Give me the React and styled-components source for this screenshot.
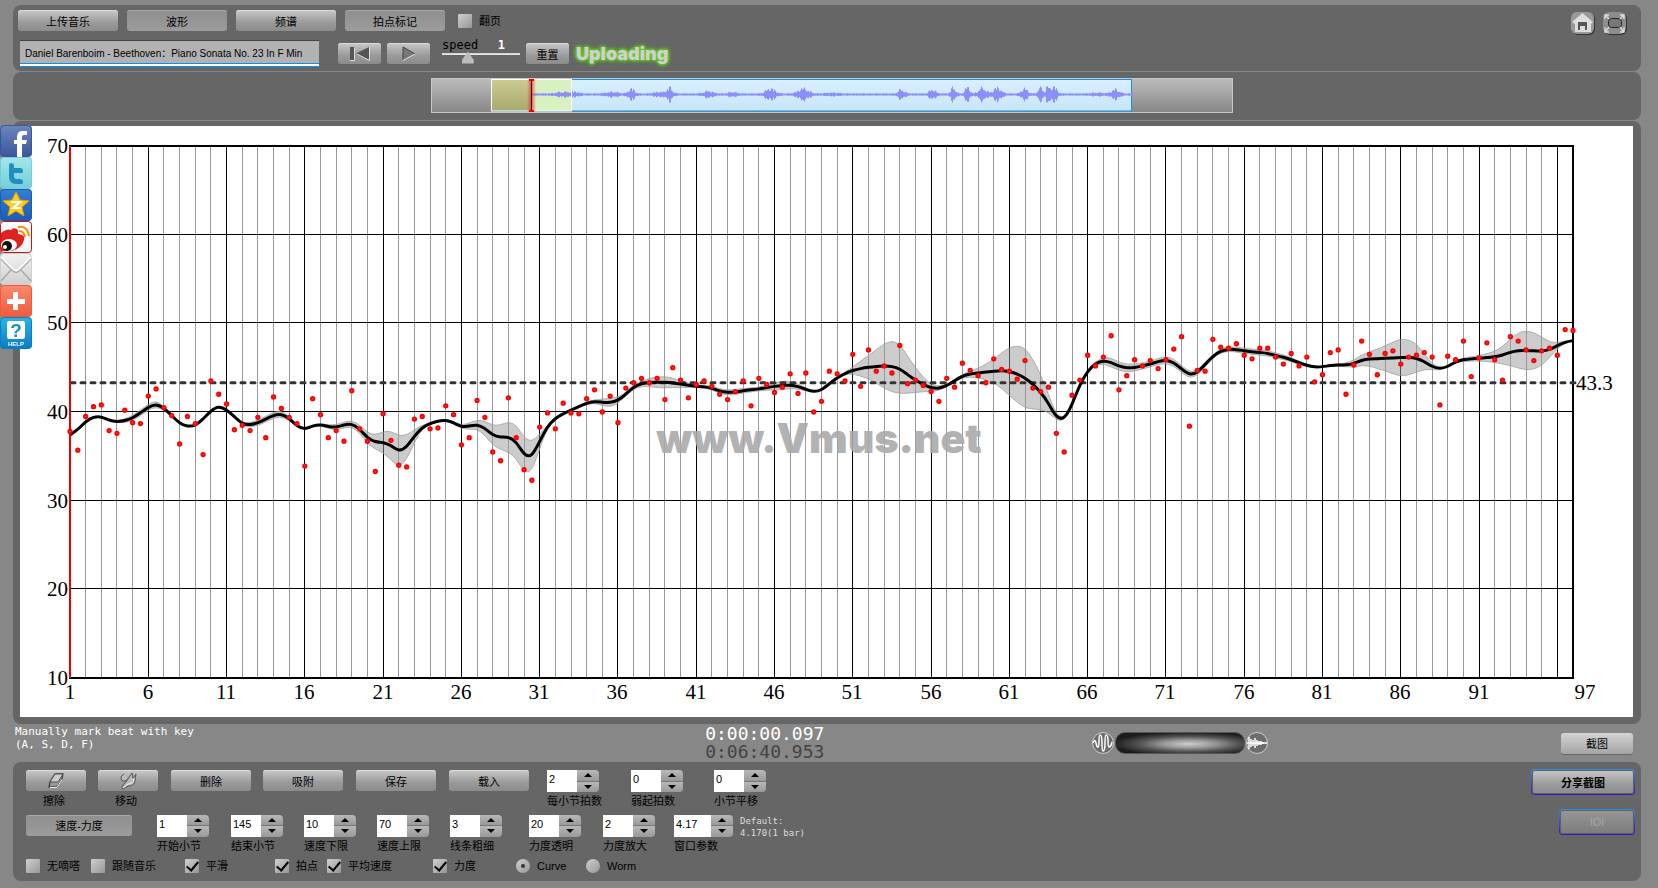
import React, { useState } from 'react';
import styled, { createGlobalStyle, css } from 'styled-components';

const sans = '"Liberation Sans", "Noto Sans CJK SC", sans-serif';
const mono = '"DejaVu Sans Mono", monospace';

const GlobalStyle = createGlobalStyle`
    * {
        box-sizing: border-box;
    }

    body {
        margin: 0;
        background: #878787;
        font-family: ${sans};
        font-size: 11px;
        color: #000;
    }

    button, input {
        font-family: inherit;
        font-size: inherit;
        color: inherit;
        margin: 0;
    }
`;

const Page = styled.div`
    display: flex;
    flex-direction: column;
    gap: 1px;
    min-width: 1100px;
    padding: 5px 17px 7px 13px;
`;

const Panel = styled.section`
    background: #666;
    border-radius: 8px;
`;

const Toolbar = styled(Panel)`
    display: flex;
    justify-content: space-between;
    height: 66px;
    padding: 5px 13px 4px 5px;
`;

const ToolRows = styled.div`
    display: flex;
    flex-direction: column;
    gap: 9px;
`;

const ToolRow = styled.div`
    display: flex;
    align-items: center;
    gap: ${props => props.$gap || 0}px;
`;

const Button = styled.button`
    display: flex;
    align-items: center;
    justify-content: center;
    flex: none;
    width: ${props => props.$w || 80}px;
    height: 21px;
    padding: 0;
    border: 0;
    border-radius: 3px;
    background: linear-gradient(#c8c8c8, #9a9a9a 60%, #8c8c8c);
    box-shadow: inset 0 1px 0 #dcdcdc;
    cursor: pointer;

    ${props => props.$pressed && css`
        background: linear-gradient(#8e8e8e, #9c9c9c);
        box-shadow: inset 0 1px 0 #a8a8a8;
    `}

    ${props => props.$light && css`
        background: linear-gradient(#d4d4d4, #a4a4a4);
        box-shadow: 0 1px 0 #666;
    `}
`;

const Frame = styled.div`
    padding: 1px;
    border-radius: 4px;
    background: linear-gradient(#2b8ef0, #3a12c6);

    & > button {
        height: 24px;
        border-radius: 3px;
        box-shadow: inset 0 0 0 1px #606060;
        font-weight: bold;
    }

    & > button:disabled {
        background: linear-gradient(#979797, #7c7c7c);
        color: #a4a4a4;
        font-weight: normal;
    }
`;

const Check = styled.input`
    appearance: none;
    display: grid;
    place-items: center;
    width: 14px;
    height: 14px;
    flex: none;
    border-radius: ${props => (props.type === 'radio' ? '50%' : '1px')};
    background: linear-gradient(135deg, #cfcfcf, #979797);

    &[type='checkbox']:checked::after {
        content: '';
        width: 5px;
        height: 10px;
        margin-bottom: 3px;
        border: solid #000;
        border-width: 0 2px 2px 0;
        transform: rotate(40deg);
    }

    &[type='radio']:checked::after {
        content: '';
        width: 4px;
        height: 4px;
        border-radius: 50%;
        background: #333;
    }
`;

const CheckLabel = styled.label`
    display: flex;
    align-items: center;
    gap: 7px;
    height: 14px;
    width: ${props => (props.$w ? props.$w + 'px' : 'auto')};
    padding-left: ${props => props.$indent || 0}px;
    line-height: 14px;
    white-space: nowrap;
`;

const SongTitle = styled.input`
    width: 299px;
    height: 27px;
    margin: 0 19px 0 2px;
    padding: 0 5px 3px;
    border: 0;
    border-top: 1px solid #444;
    border-bottom: 1px solid #0a90f0;
    background: linear-gradient(#b2b2b2 22px, #0a90f0 22px, #0a90f0 23px, #fff 23px);
    font-size: 10px;
`;

const Speed = styled.div`
    width: 78px;
    height: 27px;
    margin: 0 6px 0 12px;
    font: 12px/11px ${mono};

    & > div {
        display: flex;
        justify-content: space-between;
        padding-right: 15px;
    }

    & output {
        color: #fff;
        font-weight: bold;
    }

    & input {
        appearance: none;
        display: block;
        width: 100%;
        height: 13px;
        background: linear-gradient(#0000 2px, #ccc 2px, #eee 4px, #0000 4px);
    }

    & input::-webkit-slider-thumb {
        appearance: none;
        width: 12px;
        height: 12px;
        background: #bbb;
        clip-path: polygon(50% 0, 100% 70%, 100% 100%, 0 100%, 0 70%);
    }
`;

const Uploading = styled.div`
    margin-left: 7px;
    font: 900 18px/21px Inter, ${sans};
    color: #d0d0d0;
    text-shadow: 0 0 3px #6c2, 0 0 3px #6c2, 0 0 4px #6c2, 0 0 5px #6c2;
`;

const Corner = styled.div`
    display: flex;
    gap: 6px;
    padding-top: 1px;
`;

const CornerButton = styled.button`
    width: 26px;
    height: 25px;
    padding: 0;
    border: 0;
    background: none;

    & svg {
        display: block;
    }
`;

const Overview = styled(Panel)`
    display: flex;
    justify-content: center;
    height: 48px;
    padding: 6px 0 0 9px;
`;

const Track = styled.div`
    width: 802px;
    height: 35px;
    border: 1px solid #c8c8c8;
    background: linear-gradient(#bbb, #888);

    & svg {
        display: block;
    }
`;

const ChartPanel = styled(Panel)`
    padding: 5px 8px 7px 7px;

    & svg {
        display: block;
        width: 100%;
        height: auto;
        background: #fff;
    }
`;

const Share = styled.nav`
    position: fixed;
    left: 0;
    top: 125px;
    display: flex;
    flex-direction: column;

    & a, & svg {
        display: block;
        width: 32px;
        height: 32px;
    }
`;

const Status = styled.div`
    display: grid;
    grid-template-columns: 691fr 386fr 543fr;
    height: 36px;
    padding: 0 8px 0 2px;
`;

const Hint = styled.p`
    margin: 0;
    font: 11px/13px ${mono};
    color: #fff;
`;

const Clock = styled.div`
    font: 18px/18px ${mono};
    color: #fff;

    & div + div {
        color: #444;
    }
`;

const StatusRight = styled.div`
    display: flex;
    align-items: center;
    justify-content: space-between;
`;

const Volume = styled.div`
    display: flex;
    align-items: center;

    & input {
        appearance: none;
        width: 130px;
        height: 22px;
        border-radius: 10px;
        background: radial-gradient(ellipse at 57% 55%, #ccc, #999 25%, #555 48%, #1c1c1c 75%);
        border: 1px solid #555;
    }

    & input::-webkit-slider-thumb {
        appearance: none;
        width: 1px;
    }
`;

const Controls = styled(Panel)`
    display: flex;
    justify-content: space-between;
    height: 119px;
    padding: 7px 6px 8px 13px;
`;

const ControlRows = styled.div`
    display: flex;
    flex-direction: column;
    padding-top: 1px;
`;

const ControlRow = styled.div`
    display: flex;
    height: 45px;
`;

const Tool = styled.div`
    width: ${props => props.$slot}px;
`;

const Caption = styled.label`
    display: block;
    padding-top: 2px;
    line-height: 14px;
    white-space: nowrap;
`;

const ToolCaption = styled(Caption)`
    width: 56px;
    padding-top: 3px;
    text-align: center;
`;

const FieldBox = styled.div`
    width: ${props => props.$slot}px;
`;

const Spinner = styled.div`
    display: flex;
    height: 22px;

    & input {
        width: ${props => props.$w}px;
        height: 22px;
        padding: 0 2px 4px;
        border: 0;
        background: #fff;
    }
`;

const Steps = styled.div`
    display: flex;
    flex-direction: column;
    gap: 1px;
    width: 22px;
    border-radius: 0 4px 4px 0;
    overflow: hidden;
    background: #777;
`;

const Step = styled.button`
    flex: 1;
    display: grid;
    place-items: center;
    padding: 0;
    border: 0;
    background: linear-gradient(#b8b8b8, #999);

    &::after {
        content: '';
        border: 4px solid transparent;
        border-top-width: ${props => (props.$up ? 0 : 4)}px;
        border-bottom-width: ${props => (props.$up ? 4 : 0)}px;
        border-${props => (props.$up ? 'bottom' : 'top')}-color: #000;
    }
`;

const Default = styled.p`
    margin: 0;
    font: 9px/12px ${mono};
    color: #ddd;
`;

const Actions = styled.div`
    display: flex;
    flex-direction: column;
    align-items: flex-end;
    gap: 14px;
`;

// tempo of every half bar, in beats per minute
const beats = [
    37.8, 35.7, 39.5, 40.6, 40.8, 37.9, 37.6, 40.2, 38.8, 38.7, 41.8, 42.6, 40.5, 39.6, 36.4, 39.5,
    38.7, 35.2, 43.5, 42.0, 40.9, 38.0, 38.5, 37.9, 39.4, 37.1, 41.7, 40.4, 39.4, 38.7, 33.9, 41.5,
    39.7, 37.1, 37.9, 36.7, 42.4, 38.1, 36.7, 33.3, 39.8, 36.8, 34.0, 33.8, 39.2, 39.5, 38.1, 38.2,
    40.7, 39.7, 36.3, 37.1, 41.3, 39.4, 35.5, 34.5, 41.6, 37.1, 33.5, 32.3, 38.3, 39.9, 38.1, 41.0,
    39.9, 39.8, 41.5, 42.5, 40.0, 41.8, 38.8, 42.7, 43.3, 43.8, 43.3, 43.8, 41.4, 45.0, 43.6, 41.6,
    43.1, 43.5, 42.9, 42.0, 41.4, 42.3, 43.5, 40.7, 43.8, 43.1, 42.2, 42.8, 44.3, 42.1, 44.4, 40.0,
    41.2, 44.6, 44.3, 43.5, 46.5, 42.9, 47.0, 44.6, 45.2, 44.4, 47.5, 43.2, 43.6, 43.0, 42.3, 41.2,
    43.8, 42.8, 45.5, 44.7, 44.1, 43.3, 46.0, 44.8, 44.6, 43.7, 45.8, 42.7, 42.3, 42.8, 37.6, 35.5,
    41.9, 43.6, 46.4, 45.2, 46.2, 48.6, 42.5, 44.1, 45.9, 45.2, 45.8, 44.9, 45.9, 47.1, 48.5, 38.4,
    44.7, 44.6, 48.2, 47.3, 47.2, 47.7, 46.4, 46.0, 47.2, 47.2, 46.2, 45.4, 46.6, 45.2, 46.2, 43.4,
    44.2, 46.7, 47.0, 42.0, 45.3, 48.0, 46.5, 44.2, 46.6, 46.9, 45.4, 46.2, 46.4, 46.7, 46.2, 40.8,
    46.3, 45.9, 48.0, 44.0, 46.1, 47.8, 45.9, 43.6, 48.5, 48.0, 47.0, 45.8, 46.9, 47.2, 46.4, 49.3,
    49.2
];

const smooth = [
    37.4, 38.0, 38.95, 39.45, 39.5, 39.05, 38.9, 39.0, 39.3, 39.9, 40.55, 40.95, 40.45, 39.6, 38.7, 38.35,
    38.45, 39.2, 40.15, 40.7, 40.25, 39.5, 38.6, 38.55, 38.75, 39.2, 39.65, 39.8, 39.3, 38.4, 38.0, 38.45,
    38.6, 38.35, 38.25, 38.55, 38.7, 38.1, 37.05, 36.6, 36.6, 36.25, 35.5, 36.0, 37.3, 38.3, 38.7, 39.0,
    39.1, 38.8, 38.3, 38.4, 38.6, 38.2, 37.35, 37.15, 37.2, 36.7, 35.1, 34.9, 36.7, 38.4, 39.3, 39.8,
    40.2, 40.6, 41.0, 41.2, 41.1, 41.05, 41.3, 42.0, 42.85, 43.2, 43.35, 43.35, 43.35, 43.3, 43.15, 43.0,
    42.9, 42.85, 42.7, 42.35, 42.2, 42.25, 42.4, 42.5, 42.6, 42.75, 42.9, 43.0, 43.05, 42.9, 42.55, 42.25,
    42.45, 43.2, 43.85, 44.35, 44.7, 44.9, 45.05, 45.15, 45.2, 45.15, 44.9, 44.2, 43.6, 43.1, 42.7, 42.65,
    42.95, 43.55, 44.05, 44.3, 44.4, 44.5, 44.6, 44.7, 44.55, 44.3, 43.85, 43.15, 42.25, 41.0, 39.35, 39.1,
    40.8, 43.1, 44.65, 45.5, 45.8, 45.6, 45.15, 44.95, 45.0, 45.2, 45.4, 45.7, 45.9, 45.6, 44.85, 44.15,
    44.4, 45.35, 46.3, 46.9, 47.1, 47.05, 46.9, 46.8, 46.7, 46.65, 46.35, 46.2, 45.9, 45.55, 45.25, 45.05,
    45.1, 45.25, 45.3, 45.3, 45.45, 45.85, 46.0, 46.0, 46.05, 46.1, 46.15, 46.15, 46.1, 45.7, 45.1, 44.85,
    45.1, 45.7, 45.9, 46.0, 46.05, 46.15, 46.2, 46.4, 46.75, 46.95, 46.95, 46.9, 46.85, 47.0, 47.5, 47.9,
    48.05
];

// half height of the loudness band: [beat, bpm]
const loudness = [
    [0, 0], [4, 0], [6, 0.1], [8, 0.3], [11, 0.35], [13, 0.1], [15, 0], [20, 0], [22, 0.2], [24, 0.3],
    [27, 0.35], [29, 0.1], [31, 0], [34, 0.3], [36, 0.35], [38, 0.6], [39, 0.8], [40, 1.2], [41, 1.6],
    [42, 1.8], [43, 1.4], [44, 0.7], [45, 0.2], [47, 0], [50, 0.2], [52, 0.5], [53, 0.8], [54, 1.1],
    [55, 1.4], [56, 1.7], [57, 1.9], [58, 1.95], [59, 1.7], [60, 0.8], [61, 0.15], [63, 0], [67, 0.2],
    [69, 0.5], [71, 0.2], [73, 0.3], [75, 0.6], [76, 0.65], [78, 0.4], [80, 0.1], [84, 0.3], [88, 0.2],
    [91, 0.5], [93, 0.3], [95, 0], [99, 0.1], [100, 0.4], [102, 1.3], [103, 1.9], [104, 2.5], [105, 2.9],
    [106, 2.8], [107, 2.1], [108, 1.4], [109, 0.8], [110, 0.4], [112, 0.1], [114, 0.2], [116, 0.5],
    [118, 1.3], [119, 2], [120, 2.7], [121, 3.2], [122, 3.4], [123, 2.8], [124, 2], [125, 1], [126, 0.3],
    [128, 0], [131, 0.2], [133, 0.5], [136, 0.4], [138, 0.3], [140, 0.4], [142, 0.4], [144, 0.3],
    [146, 0.2], [150, 0.3], [154, 0.3], [157, 0.2], [160, 0], [163, 0.2], [165, 0.6], [166, 0.8],
    [168, 1.4], [169, 1.8], [170, 2.1], [171, 2], [172, 1.6], [173, 0.9], [174, 0.3], [176, 0],
    [178, 0.2], [180, 0.3], [182, 0.6], [183, 1], [184, 1.5], [185, 2], [186, 2.2], [187, 2.1],
    [188, 1.6], [189, 0.9], [190, 0.3], [192, 0]
];

const left = 50;
const right = 1553;
const top = 20;
const bottom = 552;
const xOf = beat => left + (beat * (right - left)) / 192;
const yOf = bpm => top + ((70 - bpm) * (bottom - top)) / 60;

const bandAt = beat => {
    const i = loudness.findIndex(([b]) => b >= beat);
    const [b1, v1] = loudness[i];
    if (b1 === beat) return v1;
    const [b0, v0] = loudness[i - 1];
    return v0 + ((v1 - v0) * (beat - b0)) / (b1 - b0);
};

// uniform B-spline over the points, as cubic segments
const mix = (a, b, c, wa, wb, wc) => `${a[0] * wa + b[0] * wb + c[0] * wc} ${a[1] * wa + b[1] * wb + c[1] * wc}`;

const curve = points => points.slice(1).map((b, i) => {
    const a = points[i];
    const c = points[i + 2];
    const end = c ? mix(a, b, c, 1 / 6, 2 / 3, 1 / 6) : `${b[0]} ${b[1]}`;
    return `C${mix(a, b, b, 2 / 3, 1 / 3, 0)} ${mix(a, b, b, 1 / 3, 2 / 3, 0)} ${end}`;
}).join('');

const linePoints = smooth.map((v, i) => [xOf(i), yOf(v)]);
const upper = smooth.map((v, i) => [xOf(i), yOf(v + bandAt(i))]);
const lower = smooth.map((v, i) => [xOf(i), yOf(v - bandAt(i))]).reverse();
const linePath = `M${linePoints[0]}${curve(linePoints)}`;
const bandPath = `M${upper[0]}${curve(upper)}L${lower[0]}${curve(lower)}Z`;

const TempoChart = () => {
    const bars = Array.from({ length: 97 }, (_, i) => i);
    return (
        <svg viewBox="0 0 1613 591" role="img" aria-label="Tempo curve" fontFamily="Liberation Serif, serif" fontSize="21">
            {bars.map(i => (
                <path key={i} d={`M${Math.floor(xOf(i * 2)) + 0.5} ${top}V${bottom}`} stroke={i % 5 ? '#999' : '#000'} />
            ))}
            {[20, 30, 40, 50, 60].map(v => (
                <path key={v} d={`M${left} ${Math.round(yOf(v)) - 0.5}H${right}`} stroke="#000" />
            ))}
            <rect x={left} y={top} width={right - left} height={bottom - top} fill="none" stroke="#000" strokeWidth="2" />
            <text x="799" y="327" textAnchor="middle" fontFamily="Inter, Liberation Sans, sans-serif" fontWeight="900" fontSize="41" fill="#aaa" opacity="0.9">www.Vmus.net</text>
            <path d={bandPath} fill="#999" fillOpacity="0.5" stroke="#999" strokeOpacity="0.7" />
            <path d={`M${left + 1} ${yOf(43.3)}H${right + 3}`} stroke="#333" strokeWidth="3" strokeDasharray="4 6" strokeLinecap="round" />
            <path d={linePath} fill="none" stroke="#000" strokeWidth="3" />
            <path d={`M${left} ${top}V${bottom}`} stroke="#e00" strokeWidth="2" />
            {beats.map((v, i) => (
                <circle key={i} cx={xOf(i)} cy={yOf(v)} r="1.7" fill="#a66" stroke="#f00" strokeWidth="1.9" />
            ))}
            {[10, 20, 30, 40, 50, 60, 70].map(v => (
                <text key={v} x="48" y={yOf(v) + 7} textAnchor="end">{v}</text>
            ))}
            {bars.filter(i => i % 5 === 0 && i < 95).map(i => (
                <text key={i} x={Math.floor(xOf(i * 2))} y="573" textAnchor="middle">{i + 1}</text>
            ))}
            <text x="1565" y="573" textAnchor="middle">97</text>
            <text x="1556" y="264">43.3</text>
        </svg>
    );
};

// loud passages of the recording: [x, height, spread]
const bursts = [
    [30, 2, 8], [42, 2, 6], [80, 2, 8], [99, 6, 4], [126, 2, 6], [137, 7, 4], [176, 3, 6], [200, 2, 5],
    [238, 6, 6], [271, 6, 7], [300, 1, 8], [369, 5, 4], [400, 5, 4], [421, 8, 3], [435, 8, 3], [450, 7, 5],
    [465, 7, 5], [492, 6, 4], [508, 8, 3], [515, 10, 2], [521, 9, 4], [583, 5, 5], [565, 1, 8]
];

const wave = Array.from({ length: 600 }, (_, x) => {
    const loud = bursts.reduce((sum, [c, h, w]) => sum + h * Math.exp(-(((x - c) / w) ** 2)), 0);
    const jitter = 0.4 + Math.abs(Math.sin(x * 12.9898) * Math.cos(x * 4.1)) * 0.7;
    const h = Math.min(8, 0.6 + (loud + 0.6) * jitter);
    return `M${x + 100.5} ${15.5 - h}V${15.5 + h}`;
}).join('');

const Waveform = () => (
    <svg width="800" height="33" role="img" aria-label="Waveform overview">
        <defs>
            <linearGradient id="sky" x2="0" y2="1">
                <stop stopColor="#d8efff" />
                <stop offset="1" stopColor="#c8e6fa" />
            </linearGradient>
            <linearGradient id="sand" x2="0" y2="1">
                <stop stopColor="#cbca92" />
                <stop offset="1" stopColor="#a9a86e" />
            </linearGradient>
            <linearGradient id="glow">
                <stop stopColor="#e22" stopOpacity="0" />
                <stop offset="0.5" stopColor="#e22" stopOpacity="0.7" />
                <stop offset="1" stopColor="#e22" stopOpacity="0" />
            </linearGradient>
        </defs>
        <rect x="59.5" y="0.5" width="640" height="31.5" fill="url(#sky)" stroke="#1593e8" />
        <rect x="60" y="1" width="40" height="31" fill="url(#sand)" />
        <rect x="100" y="1" width="40" height="31" fill="#d9f0c0" />
        <path d={wave} stroke="#8b90f8" />
        <rect x="59.5" y="0.5" width="80" height="31.5" fill="none" stroke="#fff" />
        <rect x="95" width="9" height="33" fill="url(#glow)" />
        <path d="M99.500 0V33" stroke="#400" />
        <path d="M97 0h5v2h-5zM97 31h5v2h-5z" fill="#e00" />
    </svg>
);

const tiles = [
    ['Facebook', '#6d86bd', '#3a559c', <path fill="#fff" d="M17 32V19h-3v-4h3v-3c0-4 2-6 6-6h4v4h-3c-2 0-2 1-2 2v3h5l-1 4h-4v13z" />],
    ['Twitter', '#a5e6ea', '#73cfd9', <path fill="#1f8fc0" d="M9 8q0-2 2-2t3 2v3h6q3 0 3 3t-3 2h-6v3q0 3 3 3h3q3 0 3 3t-3 2h-4q-7 0-7-7z" />],
    ['QZone', '#3580d6', '#1a5bb4', <g><path fill="#fc2" stroke="#e90" d="m16 3 4 8 9 1-7 6 2 9-8-5-8 5 2-9-7-6 9-1z" /><path fill="none" stroke="#fff" strokeWidth="2" d="M11 13h9l-7 6h8" /></g>],
    ['Weibo', '#fff', '#f4f4f4', <g><path fill="#d22" d="M1 12q6-5 10-3 2-3 6-1 2 2 1 5 8 1 6 6-2 8-12 11H1z" /><ellipse cx="9" cy="24" rx="8" ry="6" fill="#fff" /><circle cx="7" cy="25" r="5" fill="#111" /><circle cx="5" cy="26" r="2" fill="#fff" /><path fill="none" stroke="#f80" strokeWidth="2" d="M18 6q9-2 11 9M19 10q5 0 6 6" /><rect x="0.5" y="0.5" width="31" height="31" rx="3" fill="none" stroke="#c11" /></g>],
    ['Mail', '#f2f2f2', '#cfcfcf', <g fill="none" stroke="#aaa" strokeWidth="1.5"><path d="m1 6 12 12q3 3 6 0L31 6M1 28l10-11M31 28 21 17" /><path stroke="#fff" d="m1 4 12 12q3 3 6 0L31 4" /></g>],
    ['More', '#fb8a6c', '#ee5a3c', <path fill="#fff" d="M13 7h5v7h7v5h-7v6h-5v-6H7v-5h6z" />]
];

const ShareTile = ({ name, from, to, children }) => (
    <a href="#share" aria-label={name}>
        <svg viewBox="0 0 32 32">
            <defs>
                <linearGradient id={`tile-${name}`} x2="0" y2="1">
                    <stop stopColor={from} />
                    <stop offset="1" stopColor={to} />
                </linearGradient>
            </defs>
            <rect width="32" height="32" rx="4" fill={`url(#tile-${name})`} />
            <rect x="0.5" y="0.5" width="31" height="31" rx="4" fill="none" stroke={to} />
            {children}
        </svg>
    </a>
);

const Field = ({ id, label, value, slot, w = 30 }) => {
    const [text, setText] = useState(value);
    const step = by => setText(String(+(Number(text) + by).toFixed(2)));
    return (
        <FieldBox $slot={slot}>
            <Spinner $w={w}>
                <input id={id} value={text} onChange={e => setText(e.target.value)} />
                <Steps>
                    <Step $up aria-label={`${label} +`} onClick={() => step(1)} />
                    <Step aria-label={`${label} -`} onClick={() => step(-1)} />
                </Steps>
            </Spinner>
            <Caption htmlFor={id}>{label}</Caption>
        </FieldBox>
    );
};

const App = () => (
    <>
        <GlobalStyle />
        <Page>
            <Toolbar as="header">
                <ToolRows>
                    <ToolRow $gap={9}>
                        <Button $w={100}>上传音乐</Button>
                        <Button $w={100} $pressed>波形</Button>
                        <Button $w={100}>频谱</Button>
                        <Button $w={100} $pressed>拍点标记</Button>
                        <CheckLabel $indent={4}>
                            <Check type="checkbox" />
                            翻页
                        </CheckLabel>
                    </ToolRow>
                    <ToolRow>
                        <SongTitle aria-label="Song" defaultValue="Daniel Barenboim - Beethoven：Piano Sonata No. 23 In F Min" />
                        <ToolRow $gap={6}>
                            <Button $w={43} aria-label="Back to start">
                                <svg width="22" height="16"><path fill="#555" d="M1 1h4v13H1zM20 1v13L7 7.500z" /><path fill="none" stroke="#ddd" d="M5.500 2v12.500H1M8 8l12.500 6.500V1" /></svg>
                            </Button>
                            <Button $w={43} aria-label="Play">
                                <svg width="16" height="16"><path fill="#777" stroke="#444" d="M2 14V1l12 7" /><path fill="none" stroke="#ddd" d="m2 14.500 12-6.500" /></svg>
                            </Button>
                        </ToolRow>
                        <Speed>
                            <div>
                                <label htmlFor="speed">speed</label>
                                <output>1</output>
                            </div>
                            <input id="speed" type="range" min="0" max="3" step="0.1" defaultValue="0.9" />
                        </Speed>
                        <Button $w={43}>重置</Button>
                        <Uploading>Uploading</Uploading>
                    </ToolRow>
                </ToolRows>
                <Corner>
                    <CornerButton aria-label="Home">
                        <svg width="26" height="25"><rect x="2" y="2" width="23" height="22" rx="6" fill="#333" /><rect x="1" y="1" width="23" height="22" rx="6" fill="#999" /><path fill="#ddd" d="M12.500 2 23 11l-2 2v8H5v-8l-3-2z" /><path fill="#555" d="M8 11h9v8h-2v-4h-5v4H8z" /><path fill="#ddd" d="M11 15h3v5h-3z" /></svg>
                    </CornerButton>
                    <CornerButton aria-label="Full screen">
                        <svg width="26" height="25"><rect x="2" y="2" width="23" height="22" rx="6" fill="#333" /><rect x="1" y="1" width="23" height="22" rx="6" fill="#8c8c8c" /><rect x="6.500" y="7.500" width="13" height="9" rx="3" fill="#777" stroke="#222" /><path fill="none" stroke="#ddd" strokeWidth="1.300" d="M3 8V4h4M18 4h4v4M3 16v5h4M18 21h4v-5M3 4l4 4M22 4l-4 4M3 21l4-5M22 21l-4-5" /></svg>
                    </CornerButton>
                </Corner>
            </Toolbar>

            <Overview>
                <Track>
                    <Waveform />
                </Track>
            </Overview>

            <ChartPanel as="main">
                <TempoChart />
            </ChartPanel>

            <Status>
                <Hint>Manually mark beat with key<br />(A, S, D, F)</Hint>
                <Clock>
                    <div>0:00:00.097</div>
                    <div>0:06:40.953</div>
                </Clock>
                <StatusRight>
                    <Volume>
                        <svg width="24" height="24"><circle cx="12" cy="12" r="10.500" fill="#6c6c6c" stroke="#ccc" /><path fill="none" stroke="#fff" strokeWidth="1.500" d="M2 12q2-5 3 0t2 4q1 0 1-6t1-6q2 0 2 8t1 8q2 0 2-8t1-8q2 0 2 6t1 6q2 0 3-5" /></svg>
                        <input type="range" aria-label="Zoom" />
                        <svg width="24" height="24"><circle cx="12" cy="12" r="10.500" fill="#6c6c6c" stroke="#ccc" /><path fill="none" stroke="#fff" strokeWidth="1.500" d="M2 12h20M4 6v12M6 8v8M8 9v6M10 7v10M12 9v6M14 10v4M16 10v4M18 11v2" /></svg>
                    </Volume>
                    <Button $w={72} $light>截图</Button>
                </StatusRight>
            </Status>

            <Controls as="footer">
                <ControlRows>
                    <ControlRow>
                        <Tool $slot={72}>
                            <Button $w={60} aria-label="擦除">
                                <svg width="18" height="17"><path fill="#999" stroke="#444" strokeWidth="1.300" d="M8 2h8l-1 5-5 8H2l1-5z" /><path fill="#ccc" stroke="#555" d="M8 2h8l-5 8H3z" /><path fill="none" stroke="#eee" d="M3 15.500h7l5-8" /></svg>
                            </Button>
                            <ToolCaption as="div">擦除</ToolCaption>
                        </Tool>
                        <Tool $slot={73}>
                            <Button $w={60} aria-label="移动">
                                <svg width="18" height="18"><path fill="#bbb" stroke="#555" d="M5 2q-4 2-3 5t4 2l3-2-6 8q-1 2 1 2l5-3q6 0 7-5l1-7-3 4-1-5-4 6" /><path fill="none" stroke="#eee" d="m4 16 5-4q5 0 6-5" /></svg>
                            </Button>
                            <ToolCaption as="div">移动</ToolCaption>
                        </Tool>
                        <Tool $slot={92}><Button>删除</Button></Tool>
                        <Tool $slot={93}><Button>吸附</Button></Tool>
                        <Tool $slot={93}><Button>保存</Button></Tool>
                        <Tool $slot={98}><Button>载入</Button></Tool>
                        <Field id="beats" label="每小节拍数" value="2" slot={84} />
                        <Field id="pickup" label="弱起拍数" value="0" slot={83} />
                        <Field id="shift" label="小节平移" value="0" slot={83} />
                    </ControlRow>
                    <ControlRow>
                        <Tool $slot={131}><Button $w={106} $pressed>速度-力度</Button></Tool>
                        <Field id="start" label="开始小节" value="1" slot={74} />
                        <Field id="end" label="结束小节" value="145" slot={73} />
                        <Field id="low" label="速度下限" value="10" slot={73} />
                        <Field id="high" label="速度上限" value="70" slot={73} />
                        <Field id="stroke" label="线条粗细" value="3" slot={79} />
                        <Field id="alpha" label="力度透明" value="20" slot={74} />
                        <Field id="gain" label="力度放大" value="2" slot={71} />
                        <Field id="window" label="窗口参数" value="4.17" slot={66} w={37} />
                        <Default>Default:<br />4.170(1 bar)</Default>
                    </ControlRow>
                    <ToolRow>
                        <CheckLabel $w={65}><Check type="checkbox" />无嘀嗒</CheckLabel>
                        <CheckLabel $w={94}><Check type="checkbox" />跟随音乐</CheckLabel>
                        <CheckLabel $w={90}><Check type="checkbox" defaultChecked />平滑</CheckLabel>
                        <CheckLabel $w={52}><Check type="checkbox" defaultChecked />拍点</CheckLabel>
                        <CheckLabel $w={106}><Check type="checkbox" defaultChecked />平均速度</CheckLabel>
                        <CheckLabel $w={83}><Check type="checkbox" defaultChecked />力度</CheckLabel>
                        <CheckLabel $w={70}><Check type="radio" name="view" defaultChecked />Curve</CheckLabel>
                        <CheckLabel><Check type="radio" name="view" />Worm</CheckLabel>
                    </ToolRow>
                </ControlRows>
                <Actions>
                    <Frame><Button $w={102}>分享截图</Button></Frame>
                    <Frame><Button $w={74} disabled>IOI</Button></Frame>
                </Actions>
            </Controls>
        </Page>
        <Share aria-label="Share">
            {tiles.map(([name, from, to, icon]) => (
                <ShareTile key={name} name={name} from={from} to={to}>{icon}</ShareTile>
            ))}
            <ShareTile name="Help" from="#2cb4ea" to="#0a7cc0">
                <path fill="#fff" d="M9 4h14q2 0 2 2v14q0 2-2 2H9q-2 0-2-2V6q0-2 2-2z" />
                <text x="16" y="20" textAnchor="middle" fill="#1590d0" fontFamily="Liberation Sans, sans-serif" fontWeight="bold" fontSize="19">?</text>
                <text x="16" y="29" textAnchor="middle" fill="#fff" fontFamily="Liberation Sans, sans-serif" fontWeight="bold" fontSize="6">HELP</text>
            </ShareTile>
        </Share>
    </>
);

export default App;
